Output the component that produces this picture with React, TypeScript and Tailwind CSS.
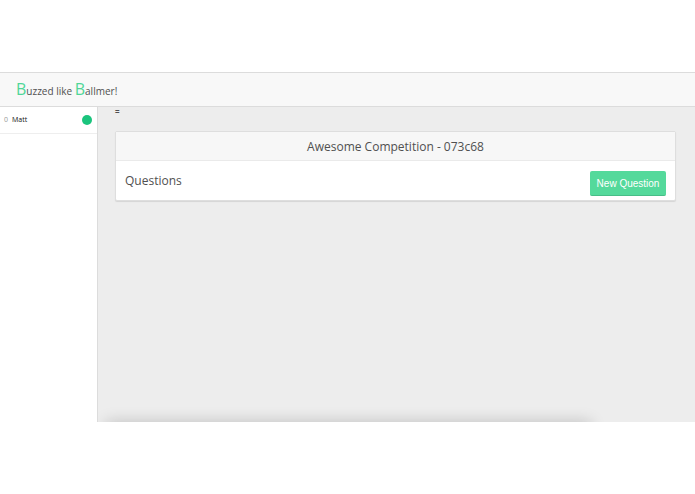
interface Player {
  name: string
  score: number
}

const players: Player[] = [{ name: 'Matt', score: 0 }]

export default function App() {
  return (
    <div className="min-h-screen flex flex-col py-18 bg-white text-[#505050] font-['Open_Sans',sans-serif]">
      <Header />
      <div className="flex-1 flex">
        <PlayerList players={players} />
        <main className="relative flex-1 min-w-0 overflow-hidden bg-[#ededed] pl-[17px] pr-[19px]">
          <p className="h-6 text-[8px] leading-[10px] font-bold">=</p>
          <Competition title="Awesome Competition - 073c68" />
          <div className="absolute left-2 right-26 top-full h-4 shadow-[0_0_16px_rgba(0,0,0,0.2)]" />
        </main>
      </div>
    </div>
  )
}

function Header() {
  return (
    <header className="h-[35px] shrink-0 flex items-center border-y border-[#dcdcdc] bg-[#f8f8f8] px-4">
      <h1 className="text-[10px] leading-5">
        <span className="text-base leading-5 text-[#4fd697]">B</span>uzzed like{' '}
        <span className="text-base leading-5 text-[#4fd697]">B</span>allmer!
      </h1>
    </header>
  )
}

function PlayerList({ players }: { players: Player[] }) {
  return (
    <aside className="w-[98px] shrink-0 border-r border-[#dcdcdc] bg-white">
      <ul>
        {players.map(p => (
          <li key={p.name} className="h-[27px] flex items-center border-b border-[#eee] pl-1 pr-[5px] text-[7px]">
            <span className="w-2 text-[#999]">{p.score}</span>
            <span className="flex-1 font-medium text-[#111]">{p.name}</span>
            <span className="size-[10px] rounded-full bg-[#1bc47d]" />
          </li>
        ))}
      </ul>
    </aside>
  )
}

function Competition({ title }: { title: string }) {
  return (
    <section className="rounded-xs border border-[#dedede] bg-white shadow-[0_1px_1px_rgba(0,0,0,0.1)]">
      <h2 className="border-b border-[#eaeaea] bg-[#f7f7f7] pt-[5px] pb-[3px] text-center text-xs leading-5 font-medium">
        {title}
      </h2>
      <div className="flex items-start justify-between px-[9px] pt-[10px] pb-1">
        <h3 className="text-xs leading-5 font-medium">Questions</h3>
        <button
          type="button"
          className="h-[25px] w-19 rounded-xs border-b border-[#47bd87] bg-[#54d99b] font-['Liberation_Sans',Arial,sans-serif] text-[10px] text-white"
        >
          New Question
        </button>
      </div>
    </section>
  )
}
